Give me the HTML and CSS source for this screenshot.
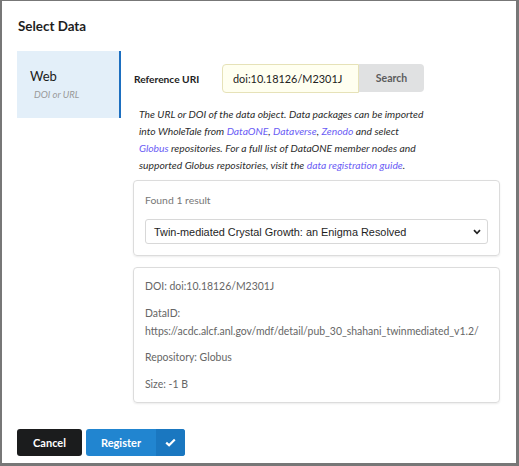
FILE: index.html
```html
<!DOCTYPE html>
<html>
<head>
<meta charset="utf-8">
<link rel="stylesheet" href="styles.css">
</head>
<body>
<div class="frame">
  <div class="header">Select Data</div>
  <div class="content">
    <div class="tabs">
      <div class="tab active">
        <div class="tab-title">Web</div>
        <div class="tab-sub">DOI or URL</div>
      </div>
    </div>
    <div class="main">
      <div class="form-row">
        <label class="label">Reference URI</label>
        <div class="action-input">
          <input class="uri" type="text" value="doi:10.18126/M2301J">
          <button class="search">Search</button>
        </div>
      </div>
      <p class="help">The URL or DOI of the data object. Data packages can be imported into WholeTale from <a href="#">DataONE</a>, <a href="#">Dataverse</a>, <a href="#">Zenodo</a> and select <a href="#">Globus</a>&nbsp;repositories. For a full list of DataONE member nodes and supported Globus repositories, visit the <a href="#">data registration guide</a>.</p>
      <div class="segment results">
        <div class="found">Found 1 result</div>
        <div class="select">
          <span>Twin-mediated Crystal Growth: an Enigma Resolved</span>
          <svg class="chev" width="8" height="6" viewBox="0 0 8 6"><path d="M1 1.2 L4 4.3 L7 1.2" fill="none" stroke="#222" stroke-width="1.7"/></svg>
        </div>
      </div>
      <div class="segment details">
        <p>DOI: doi:10.18126/M2301J</p>
        <p>DataID:<br>https://acdc.alcf.anl.gov/mdf/detail/pub_30_shahani_twinmediated_v1.2/</p>
        <p>Repository: Globus</p>
        <p>Size: -1 B</p>
      </div>
    </div>
  </div>
  <div class="actions">
    <button class="btn cancel">Cancel</button>
    <button class="btn register"><span class="reg-text">Register</span><span class="reg-icon"><svg width="11" height="9" viewBox="0 0 11 9"><path d="M1.2 4.6 L4.1 7.2 L9.8 1.5" fill="none" stroke="#fff" stroke-width="2.2"/></svg></span></button>
  </div>
</div>
</body>
</html>
```
FILE: styles.css
```css
* { box-sizing: border-box; }
html, body { margin: 0; padding: 0; background: #fff; }
body { font-family: Lato, "Open Sans", sans-serif; color: #222; }
.frame {
  width: 519px;
  height: 466px;
  border-style: solid;
  border-color: #777;
  border-width: 1px 3px 3px 2px;
  background: #fff;
  display: flex;
  flex-direction: column;
  overflow: hidden;
}
.frame > * { flex: none; }
.header {
  font-size: 13.4px;
  font-weight: 700;
  line-height: 20px;
  padding: 15px 0 0 16px;
  height: 50px;
  color: #1e1e1e;
}
.content {
  display: flex;
  gap: 12px;
  padding: 0 16px 0 15px;
}
.tabs { width: 104px; flex: none; }
.tab.active {
  height: 67px;
  background: #e3eff9;
  border-right: 2px solid #1d6fc0;
  padding: 17px 0 0 13px;
}
.tab-title { font-size: 13px; line-height: 16px; color: #1b1b1b; }
.tab-sub { font-size: 9.5px; font-style: italic; color: #9a9a9a; padding: 5px 0 0 4px; line-height: 12px; }
.main { flex: 1; min-width: 0; display: flex; flex-direction: column; }
.form-row {
  display: flex;
  align-items: center;
  margin-top: 13px;
  padding-left: 1px;
}
.label { width: 88px; font-size: 10.2px; font-weight: 700; color: #222; }
.action-input { display: flex; align-items: flex-start; }
.uri {
  width: 137px;
  height: 29px;
  border: 1px solid #e6e2b8;
  border-radius: 4px 0 0 4px;
  background: #fffff0;
  font-family: Lato, sans-serif;
  font-size: 10.9px;
  color: #222;
  padding: 0 10px;
  outline: none;
}
.search {
  width: 65px;
  height: 28px;
  border: none;
  border-radius: 0 4px 4px 0;
  background: #e0e1e2;
  color: #5c5c5c;
  font-family: Lato, sans-serif;
  font-weight: 700;
  font-size: 10.5px;
  padding: 0;
}
.help {
  margin: 13px 0 0 6px;
  width: 292px;
  font-size: 10.3px;
  font-style: italic;
  line-height: 17px;
  color: #2c2c2c;
}
.help a { color: #6a5cf5; text-decoration: none; }
.segment {
  border: 1px solid #dcdcdc;
  border-radius: 4px;
  box-shadow: 0 1px 2px rgba(0,0,0,0.08);
  padding: 0 11px;
}
.results { margin-top: 6px; padding-top: 11px; padding-bottom: 11px; height: 76px; }
.found { font-size: 10.4px; line-height: 17px; color: #777; }
.select {
  margin-top: 10px;
  height: 25px;
  border: 1px solid #d8d8d8;
  border-radius: 3px;
  display: flex;
  align-items: center;
  justify-content: space-between;
  padding: 0 6px 0 8px;
  font-family: "Liberation Sans", Arial, sans-serif;
  font-size: 10.9px;
  color: #1e1e1e;
}
.chev { margin-top: 1px; }
.details { margin-top: 11px; padding-top: 9px; padding-bottom: 9px; height: 136px; }
.details p {
  margin: 0 0 8.5px;
  font-size: 10.45px;
  line-height: 18px;
  color: #666;
}
.details p:last-child { margin-bottom: 0; }
.actions {
  display: flex;
  gap: 4px;
  padding: 26px 0 0 15px;
}
.btn {
  height: 27px;
  border: none;
  border-radius: 3px;
  font-family: Lato, sans-serif;
  font-weight: 700;
  font-size: 11px;
  color: #fff;
  padding: 0;
}
.cancel { width: 65px; background: #1b1c1d; }
.register {
  width: 99px;
  background: #2185d0;
  display: flex;
  align-items: stretch;
  overflow: hidden;
}
.reg-text { flex: 1; display: flex; align-items: center; justify-content: center; }
.reg-icon {
  width: 29px;
  background: #1a77c0;
  display: flex;
  align-items: center;
  justify-content: center;
}
```
